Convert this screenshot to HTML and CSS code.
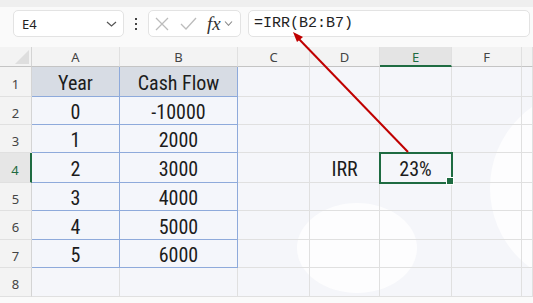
FILE: index.html
```html
<!DOCTYPE html>
<html lang="en">

<head>
   <meta charset="UTF-8">
   <meta name="viewport" content="width=device-width, initial-scale=1.0">
   <title>IRR</title>
   <link rel="stylesheet" href="styles.css">
</head>

<body>
   <div class="app">
      <div class="topband"></div>

      <div class="formula-bar">
         <div class="namebox">
            <span>E4</span>
            <svg class="chev" width="11" height="6" viewBox="0 0 11 6"><path d="M1 1 L5.5 5 L10 1" fill="none" stroke="#555" stroke-width="1.2"/></svg>
         </div>
         <div class="dots"><i></i><i></i><i></i></div>
         <div class="fxbox">
            <svg width="14" height="14" viewBox="0 0 14 14"><path d="M1 1 L13 13 M13 1 L1 13" stroke="#bcbcbc" stroke-width="1.3"/></svg>
            <svg width="17" height="13" viewBox="0 0 17 13"><path d="M1 7 L6 12 L16 1" fill="none" stroke="#bcbcbc" stroke-width="1.3"/></svg>
            <span class="fx">fx</span>
            <svg width="9" height="5" viewBox="0 0 9 5"><path d="M1 0.5 L4.5 4.3 L8 0.5" fill="none" stroke="#888" stroke-width="1.1"/></svg>
         </div>
         <div class="formula">=IRR(B2:B7)</div>
      </div>

      <div class="sheet">
         <div class="blob blob-oval"></div>
         <div class="blob blob-round"></div>

         <div class="grid">
            <div class="corner"><span></span></div>
            <div class="colhead">A</div>
            <div class="colhead">B</div>
            <div class="colhead">C</div>
            <div class="colhead">D</div>
            <div class="colhead active">E</div>
            <div class="colhead">F</div>
            <div class="colhead"></div>

            <div class="rowhead">1</div>
            <div class="cell thead">Year</div>
            <div class="cell thead">Cash Flow</div>
            <div class="cell"></div><div class="cell"></div><div class="cell"></div><div class="cell"></div><div class="cell"></div>

            <div class="rowhead">2</div>
            <div class="cell tdata">0</div>
            <div class="cell tdata">-10000</div>
            <div class="cell"></div><div class="cell"></div><div class="cell"></div><div class="cell"></div><div class="cell"></div>

            <div class="rowhead">3</div>
            <div class="cell tdata">1</div>
            <div class="cell tdata">2000</div>
            <div class="cell"></div><div class="cell"></div><div class="cell"></div><div class="cell"></div><div class="cell"></div>

            <div class="rowhead active">4</div>
            <div class="cell tdata">2</div>
            <div class="cell tdata">3000</div>
            <div class="cell"></div>
            <div class="cell">IRR</div>
            <div class="cell selected">23%</div>
            <div class="cell"></div><div class="cell"></div>

            <div class="rowhead">5</div>
            <div class="cell tdata">3</div>
            <div class="cell tdata">4000</div>
            <div class="cell"></div><div class="cell"></div><div class="cell"></div><div class="cell"></div><div class="cell"></div>

            <div class="rowhead">6</div>
            <div class="cell tdata">4</div>
            <div class="cell tdata">5000</div>
            <div class="cell"></div><div class="cell"></div><div class="cell"></div><div class="cell"></div><div class="cell"></div>

            <div class="rowhead">7</div>
            <div class="cell tdata">5</div>
            <div class="cell tdata">6000</div>
            <div class="cell"></div><div class="cell"></div><div class="cell"></div><div class="cell"></div><div class="cell"></div>

            <div class="rowhead">8</div>
            <div class="cell"></div><div class="cell"></div><div class="cell"></div><div class="cell"></div><div class="cell"></div><div class="cell"></div><div class="cell"></div>
         </div>
      </div>

      <!-- red arrow from E4 up to the formula -->
      <svg class="arrow" width="533" height="303" viewBox="0 0 533 303">
         <line x1="408" y1="152" x2="297" y2="37" stroke="#c00000" stroke-width="2"/>
         <path d="M293 32 L303 37 L297 42 Z" fill="#c00000"/>
      </svg>
   </div>
</body>

</html>
```

FILE: styles.css
```css
* {
   margin: 0;
   padding: 0;
   box-sizing: border-box;
}

body {
   background: #fafafa;
   font-family: "Noto Sans", "Liberation Sans", sans-serif;
   overflow: hidden;
}

.app {
   position: relative;
   width: 533px;
   height: 303px;
   overflow: hidden;
}

.topband {
   height: 7px;
   background: #efefef;
}

.formula-bar {
   display: flex;
   align-items: center;
   height: 27px;
   margin-top: 3px;
   padding-left: 13px;
}

.namebox,
.fxbox,
.formula {
   height: 27px;
   background: #fff;
   border: 1px solid #e3e3e3;
   border-radius: 5px;
   display: flex;
   align-items: center;
}

.namebox {
   width: 111px;
   justify-content: space-between;
   padding: 0 6px 0 8px;
   font-size: 13px;
   color: #222;
}

.dots {
   width: 24px;
   display: flex;
   flex-direction: column;
   align-items: center;
   gap: 3px;
}

.dots i {
   width: 2px;
   height: 2px;
   background: #444;
}

.fxbox {
   width: 93px;
   padding-left: 6px;
   gap: 10px;
}

.fxbox svg:nth-child(2) {
   margin-left: 1px;
}

.fx {
   font-family: "Liberation Serif", serif;
   font-style: italic;
   font-size: 19px;
   color: #333;
   margin-left: 0;
   margin-right: -7px;
}

.formula {
   width: 282px;
   margin-left: 7px;
   padding-left: 5px;
   font-family: "Liberation Mono", monospace;
   font-size: 15px;
   color: #222;
}

.sheet {
   position: relative;
   margin-top: 10px;
   background: #f5f6fa;
}

.blob {
   position: absolute;
   background: #fdfdfe;
   border-radius: 50%;
}

.blob-oval {
   left: 297px;
   top: 156px;
   width: 120px;
   height: 90px;
}

.blob-round {
   left: 490px;
   top: 42px;
   width: 198px;
   height: 198px;
}

.grid {
   position: relative;
   display: grid;
   grid-template-columns: 32px 88px 118px 72px 70px 72px 70px 1fr;
   grid-template-rows: 20px 30px 28px 28px 30px 28px 29px 28px 29px;
}

.corner,
.colhead,
.rowhead {
   background: #f3f3f3;
   color: #444;
   font-size: 13px;
   display: flex;
   align-items: center;
   justify-content: center;
}

.corner {
   border-right: 1px solid #d4d4d4;
   border-bottom: 1px solid #c4c4c4;
   justify-content: flex-end;
   align-items: flex-end;
   padding: 0 2px 2px 0;
}

.corner span {
   width: 0;
   height: 0;
   border-left: 14px solid transparent;
   border-bottom: 14px solid #dedede;
}

.colhead {
   border-right: 1px solid #e0e0e0;
   border-bottom: 1px solid #c4c4c4;
   padding-top: 1px;
}

.colhead.active {
   background: #e4e4e4;
   color: #1e6b41;
   border-bottom: 2px solid #1e6b41;
}

.rowhead {
   border-right: 1px solid #d4d4d4;
   border-bottom: 1px solid #e0e0e0;
   padding-top: 4px;
}

.rowhead.active {
   background: #e6e6e6;
   color: #1e6b41;
   border-right: 2px solid #1e6b41;
}

.cell {
   border-right: 1px solid #e0e0e0;
   border-bottom: 1px solid #e0e0e0;
   display: flex;
   align-items: center;
   justify-content: center;
   padding-top: 3px;
   font-family: "Liberation Sans Narrow", "Roboto Condensed", Roboto, sans-serif;
   font-size: 20px;
   color: #1c1c1c;
}

.thead {
   background: #d7dce4;
   border-color: #8eaadb;
}

.tdata {
   background: #f4f6fb;
   border-color: #8eaadb;
}

.selected {
   position: relative;
   outline: 2px solid #1e6b41;
   outline-offset: -1px;
}

.selected::after {
   content: "";
   position: absolute;
   right: -3px;
   bottom: -3px;
   width: 6px;
   height: 6px;
   background: #1e6b41;
   border: 1px solid #fff;
}

.arrow {
   position: absolute;
   left: 0;
   top: 0;
   pointer-events: none;
}
```
